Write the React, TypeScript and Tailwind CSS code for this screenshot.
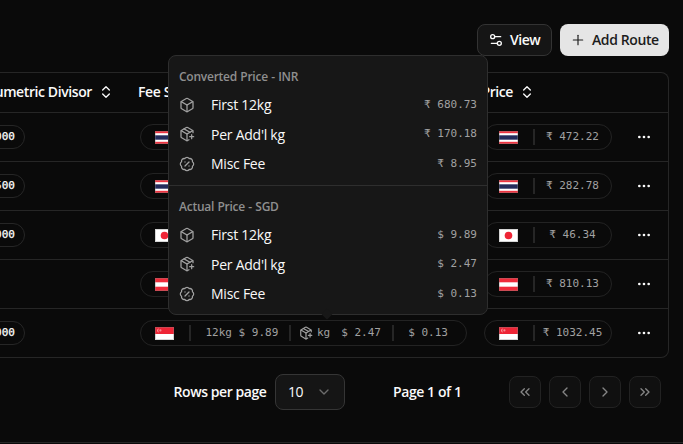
import type { ReactNode } from 'react';
import {
  BadgePercent,
  Box,
  ChevronDown,
  ChevronLeft,
  ChevronRight,
  ChevronsLeft,
  ChevronsRight,
  ChevronsUpDown,
  Ellipsis,
  PackagePlus,
  Plus,
  Settings2,
} from 'lucide-react';

type Country = 'th' | 'jp' | 'at' | 'sg';

const mono = "font-['DejaVu_Sans_Mono','Liberation_Mono',monospace] text-[11px] whitespace-pre";

const rows: { divisor: string | null; country: Country; price: string }[] = [
  { divisor: '5000', country: 'th', price: '472.22' },
  { divisor: '5500', country: 'th', price: '282.78' },
  { divisor: '5000', country: 'jp', price: '46.34' },
  { divisor: null, country: 'at', price: '810.13' },
  { divisor: '5000', country: 'sg', price: '1032.45' },
];

function Flag({ country }: { country: Country }) {
  return (
    <svg width="19" height="13" viewBox="0 0 19 13" className="shrink-0">
      <rect width="19" height="13" fill="#ffffff" />
      {country === 'th' && (
        <>
          <rect width="19" height="2.2" fill="#ef3340" />
          <rect y="10.8" width="19" height="2.2" fill="#ef3340" />
          <rect y="4.3" width="19" height="4.4" fill="#242c5c" />
        </>
      )}
      {country === 'jp' && <circle cx="9.5" cy="6.5" r="3.8" fill="#ee2536" />}
      {country === 'at' && (
        <>
          <rect width="19" height="4.3" fill="#ef2b3a" />
          <rect y="8.7" width="19" height="4.3" fill="#ef2b3a" />
        </>
      )}
      {country === 'sg' && (
        <>
          <rect width="19" height="7" fill="#ee2536" />
          <path d="M4.2 1.4a2 2 0 1 0 0 4 2.4 2.4 0 0 1 0-4z" fill="#fbb" />
          <circle cx="5.4" cy="3.4" r="1.1" fill="#f58a92" />
        </>
      )}
      <rect x=".5" y=".5" width="18" height="12" fill="none" stroke="#888" strokeOpacity=".35" />
    </svg>
  );
}

function Separator() {
  return <div className="h-4 w-[2px] shrink-0 bg-[#262626]" />;
}

function FeePill({ country, detailed }: { country: Country; detailed: boolean }) {
  return (
    <div className="flex h-[26px] w-[327px] items-center rounded-full border border-[#232323] pl-[14px] text-[#a1a1a1]">
      <Flag country={country} />
      {detailed && (
        <>
          <div className="w-[15px]" />
          <Separator />
          <span className={`${mono} w-[98px] pb-px pl-[14.5px]`}>12kg $ 9.89</span>
          <Separator />
          <PackagePlus size={14} strokeWidth={2} className="mb-px ml-[8px] shrink-0" />
          <span className={`${mono} ml-[4px] pb-px`}>kg</span>
          <span className={`${mono} ml-[11px] w-[51px] pb-px`}>$ 2.47</span>
          <Separator />
          <span className={`${mono} ml-[14px] pb-px`}>$ 0.13</span>
        </>
      )}
    </div>
  );
}

function PricePill({ country, price }: { country: Country; price: string }) {
  return (
    <div className="flex h-[26px] w-[128px] items-center rounded-full border border-[#232323] pl-[14px] text-[#a1a1a1]">
      <Flag country={country} />
      <div className="w-[15px] shrink-0" />
      <Separator />
      <span className={`${mono} w-[75px] text-center`}>₹ {price}</span>
    </div>
  );
}

function Line({ icon, label, value }: { icon: ReactNode; label: string; value: string }) {
  return (
    <div className="flex h-[29.5px] items-center">
      <span className="w-8 text-[#a1a1a1]">{icon}</span>
      <span className="flex-1 pt-px text-sm tracking-[-0.25px] text-[#fafafa]">{label}</span>
      <span className={`${mono} text-[#a1a1a1]`}>{value}</span>
    </div>
  );
}

function PriceGroup({ title, values }: { title: string; values: string[] }) {
  return (
    <div className="h-[129px] px-[10px] pt-[13px]">
      <div className="mb-[5px] h-4 text-xs leading-4 font-semibold tracking-[-0.25px] text-[#8f8f8f] [word-spacing:0.5px]">
        {title}
      </div>
      <Line icon={<Box size={16} strokeWidth={1.9} />} label="First 12kg" value={values[0]} />
      <Line icon={<PackagePlus size={16} strokeWidth={1.9} />} label="Per Add'l kg" value={values[1]} />
      <Line icon={<BadgePercent size={16} strokeWidth={1.9} />} label="Misc Fee" value={values[2]} />
    </div>
  );
}

function PriceTooltip() {
  return (
    <div className="absolute top-[55px] left-[168px] h-[260px] w-[320px] rounded-lg border border-[#2e2e2e] bg-[#171717]">
      <PriceGroup title="Converted Price - INR" values={['₹ 680.73', '₹ 170.18', '₹ 8.95']} />
      <div className="h-px bg-[#2e2e2e]" />
      <PriceGroup title="Actual Price - SGD" values={['$ 9.89', '$ 2.47', '$ 0.13']} />
      <div className="absolute top-[254px] left-[154px] size-[8px] rotate-45 rounded-[1px] bg-[#171717]" />
    </div>
  );
}

function PageButton({ children }: { children: ReactNode }) {
  return (
    <button className="flex size-8 items-center justify-center rounded-lg border border-[#222222] bg-[#101010] text-[#858585]">
      {children}
    </button>
  );
}

export default function App() {
  return (
    <div className="relative flex h-[444px] w-[683px] flex-col overflow-hidden bg-[#0a0a0a] font-['Open_Sans','Noto_Sans',sans-serif] text-sm text-[#fafafa]">
      <div className="flex justify-end gap-2 pt-6 pr-[14px]">
        <button className="flex h-8 w-[75px] items-center gap-[6px] rounded-lg border border-[#333333] bg-[#151515] pl-[10px] font-semibold tracking-[-0.5px] whitespace-nowrap">
          <Settings2 size={16} className="shrink-0" />
          View
        </button>
        <button className="flex h-8 w-[109px] items-center gap-[6px] rounded-lg bg-[#e5e5e5] pl-[10px] font-semibold tracking-[-0.4px] whitespace-nowrap text-[#1c1c1c]">
          <Plus size={16} strokeWidth={1.75} className="shrink-0" />
          Add Route
        </button>
      </div>

      <div className="mt-4 h-[286px] w-[669px] rounded-r-lg border border-l-0 border-[#262626]">
        <div className="flex h-10 items-center border-b border-[#262626] pb-px font-semibold tracking-[-0.4px] whitespace-nowrap">
          <div className="flex w-[114px] items-center justify-end gap-[6px]">
            Volumetric Divisor
            <ChevronsUpDown size={16} className="shrink-0" />
          </div>
          <div className="w-[344px] pl-6">Fee Structure</div>
          <div className="flex w-[77px] items-center justify-end gap-[6px]">
            Price
            <ChevronsUpDown size={16} className="shrink-0" />
          </div>
        </div>
        {rows.map((row, i) => (
          <div key={i} className="flex h-[49px] items-center border-b border-[#262626] last:border-b-0 last:pb-px">
            <div className="flex w-[140px]">
              {row.divisor && (
                <div className="-ml-[23px] flex h-6 w-12 items-center justify-end rounded-full border border-[#262626] pr-[9px]">
                  <span className={`${mono} text-white [-webkit-text-stroke:0.25px_white]`}>{row.divisor}</span>
                </div>
              )}
            </div>
            <div className="w-[344px]">
              <FeePill country={row.country} detailed={i === 4} />
            </div>
            <PricePill country={row.country} price={row.price} />
            <Ellipsis size={16} className="ml-6" />
          </div>
        ))}
      </div>

      <div className="mt-4 flex h-9 items-center justify-end pr-[22px] font-semibold tracking-[-0.42px] whitespace-nowrap">
        <span className="w-[101.5px]">Rows per page</span>
        <div className="flex h-9 w-[70px] items-center justify-between rounded-lg border border-[#353535] bg-[#151515] px-3 font-normal">
          10
          <ChevronDown size={16} className="text-[#6b6b6b]" />
        </div>
        <span className="ml-12 w-[116px]">Page 1 of 1</span>
        <div className="flex gap-2">
          <PageButton><ChevronsLeft size={16} /></PageButton>
          <PageButton><ChevronLeft size={16} /></PageButton>
          <PageButton><ChevronRight size={16} /></PageButton>
          <PageButton><ChevronsRight size={16} /></PageButton>
        </div>
      </div>

      <div className="mt-8 h-px bg-[#262626]" />

      <PriceTooltip />
    </div>
  );
}
